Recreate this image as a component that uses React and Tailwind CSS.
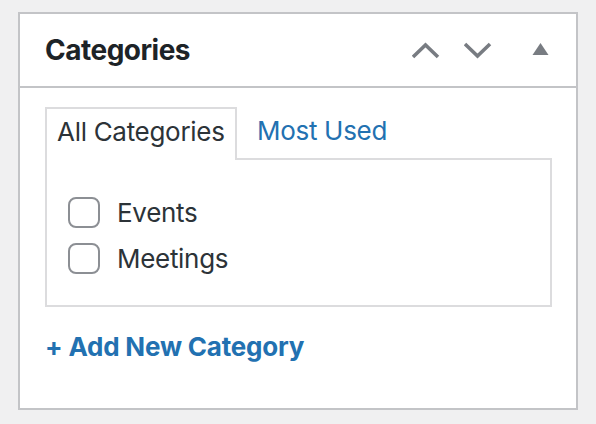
import { useState } from 'react'

const font = { fontFamily: 'Inter, "Noto Sans", sans-serif' }

function Chevron({ dir }) {
  return (
    <svg width="28" height="17" viewBox="0 0 28 17" className="text-[#787c82]">
      <polyline
        points={dir === 'up' ? '1,15 13.5,3 26,15' : '1,2 13.5,14 26,2'}
        fill="none"
        stroke="currentColor"
        strokeWidth="3.6"
      />
    </svg>
  )
}

function Check({ label }) {
  const [checked, setChecked] = useState(false)
  return (
    <label className="flex items-center gap-[17px] cursor-pointer">
      <span
        onClick={() => setChecked(!checked)}
        className="w-[32px] h-[31px] rounded-[8px] border-2 border-[#8c8f94] bg-white flex items-center justify-center"
      >
        {checked && <span className="w-3 h-3 bg-[#2271b1] rounded-sm" />}
      </span>
      <span className="text-[26px] text-[#2c3338] leading-none tracking-[-0.3px]">{label}</span>
    </label>
  )
}

export default function App() {
  const [tab, setTab] = useState('all')

  return (
    <div className="w-[596px] h-[424px] bg-[#f0f0f1] pl-[18px] pt-[12px]" style={font}>
      <div className="w-[560px] h-[398px] border-2 border-[#c3c4c7] bg-white">
        {/* Header */}
        <div className="h-[74px] flex items-center border-b-2 border-[#c3c4c7] pl-[25px] pr-[27px]">
          <h2 className="text-[28px] font-bold text-[#1d2327] tracking-[-0.5px] flex-1">Categories</h2>
          <div className="flex items-center">
            <Chevron dir="up" />
            <div className="w-[24px]" />
            <Chevron dir="down" />
            <div className="w-[40px]" />
            <svg width="17" height="12" viewBox="0 0 17 12" className="text-[#787c82] -mt-[2px]">
              <polygon points="8.5,0 16.5,12 0.5,12" fill="currentColor" />
            </svg>
          </div>
        </div>

        {/* Body */}
        <div className="pl-[25px] pr-[24px] pt-[19px]">
          <div className="flex items-end">
            <button
              onClick={() => setTab('all')}
              className="relative z-10 -mb-[2px] h-[53px] w-[192px] border-2 border-b-0 border-[#dcdcde] bg-white pl-[10px] text-left text-[26px] tracking-[-0.3px] text-[#2c3338] pb-[6px]"
            >
              All Categories
            </button>
            <button
              onClick={() => setTab('used')}
              className="ml-[20px] pb-[8px] text-[26px] tracking-[-0.3px] text-[#2271b1]"
            >
              Most Used
            </button>
          </div>
          <div className="h-[149px] w-[507px] border-2 border-[#dcdcde] pl-[21px] pt-[37px] flex flex-col gap-[15px]">
            <Check label="Events" />
            <Check label="Meetings" />
          </div>
          <a href="#" className="block mt-[27px] text-[26px] font-bold tracking-[-0.2px] text-[#2271b1] leading-none">
            + Add New Category
          </a>
        </div>
      </div>
    </div>
  )
}
